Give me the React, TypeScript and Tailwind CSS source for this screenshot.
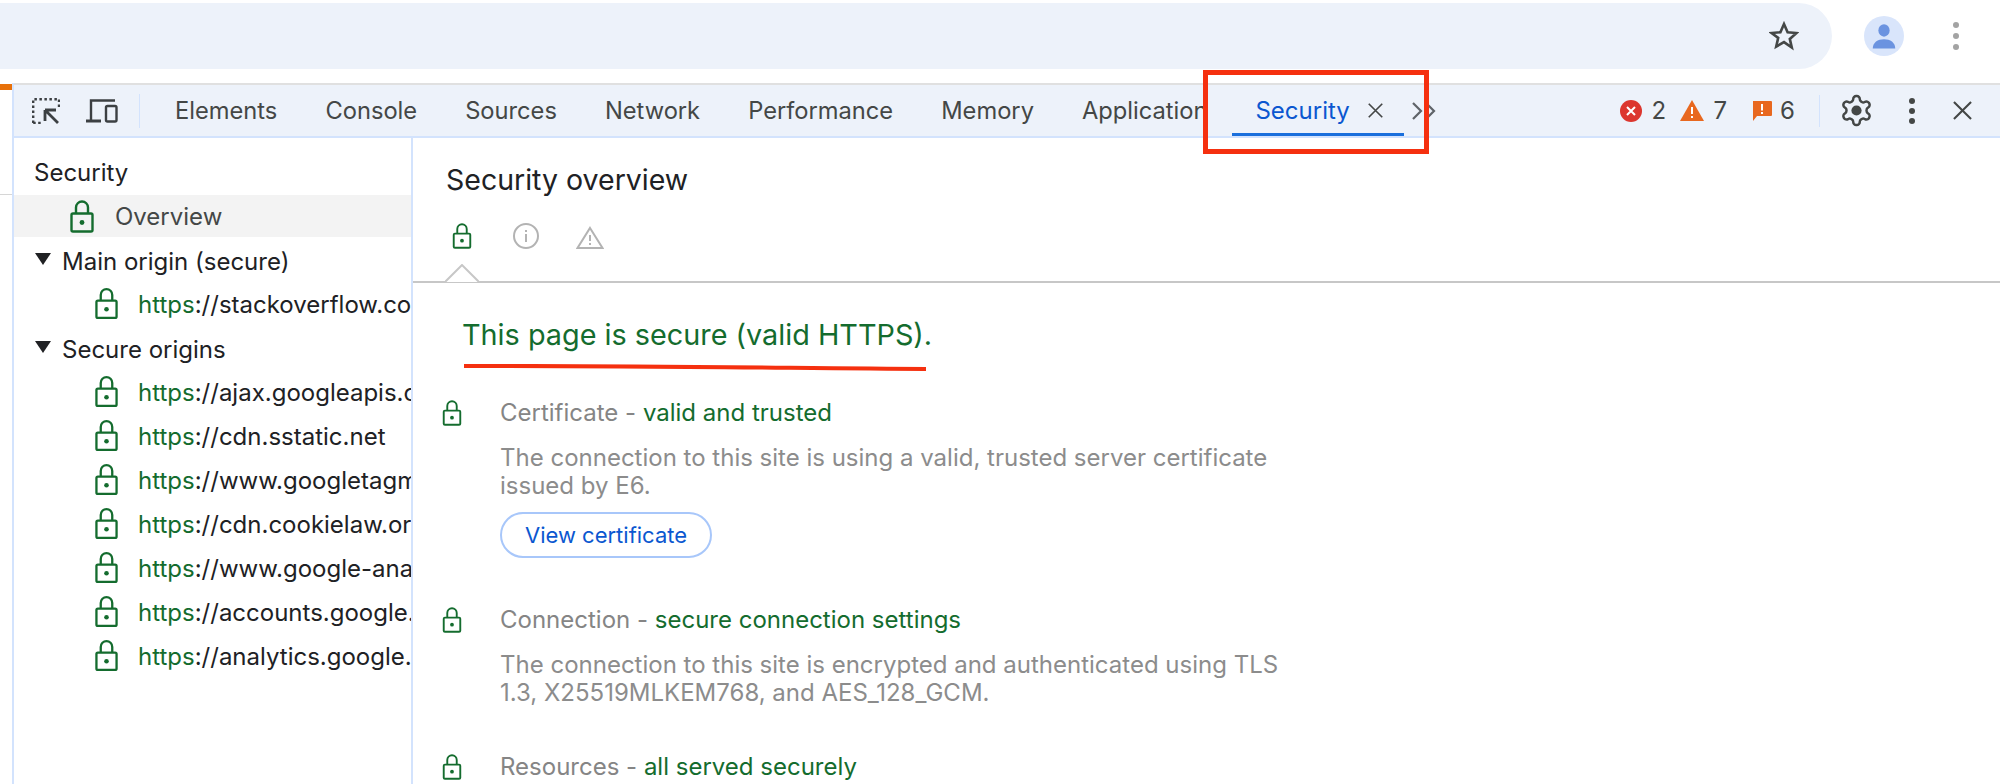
const tabs = ["Elements", "Console", "Sources", "Network", "Performance", "Memory"];

const origins = [
  "ajax.googleapis.com",
  "cdn.sstatic.net",
  "www.googletagmanager.com",
  "cdn.cookielaw.org",
  "www.google-analytics.com",
  "accounts.google.com",
  "analytics.google.com",
];

const Lock = ({ className }: { className: string }) => (
  <svg viewBox="0 0 24 33" className={`shrink-0 ${className}`} fill="none" stroke="#146c2e" strokeWidth="2.4">
    <rect x="1.5" y="13.5" width="21" height="18" rx="1.5" />
    <path d="M6 13.5V7.5a6 6 0 0 1 12 0v6" />
    <circle cx="12" cy="22.5" r="2.4" fill="#146c2e" stroke="none" />
  </svg>
);

const Cross = ({ className }: { className: string }) => (
  <svg viewBox="0 0 20 20" className={`shrink-0 ${className}`} fill="none" stroke="#444746" strokeWidth="2.2">
    <path d="M1 1l18 18M19 1L1 19" />
  </svg>
);

const OriginRow = ({ host }: { host: string }) => (
  <div className="flex h-[44px] items-center pl-[81px]">
    <Lock className="h-[33px] w-[23px]" />
    <span className="ml-[20px] whitespace-nowrap pt-[4px] text-[#202124]">
      <span className="text-[#146c2e]">https</span>://{host}
    </span>
  </div>
);

const TreeHeader = ({ label }: { label: string }) => (
  <div className="flex h-[44px] items-center pl-[21px]">
    <svg viewBox="0 0 16 12" className="h-[12px] w-[16px]">
      <path d="M0 0h16L8 12z" fill="#202124" />
    </svg>
    <span className="ml-[11px] pt-[5px] text-[#202124]">{label}</span>
  </div>
);

const Section = ({ label, value, children }: { label: string; value: string; children?: React.ReactNode }) => (
  <div className="flex">
    <Lock className="mt-[1px] h-[26px] w-[20px]" />
    <div className="ml-[38px] w-[790px]">
      <div className="leading-[28px] text-[#858585]">
        {label} - <span className="text-[#146c2e]">{value}</span>
      </div>
      {children}
    </div>
  </div>
);

export default function App() {
  return (
    <div className="flex h-[784px] w-[2000px] flex-col overflow-hidden bg-white pt-[3px] font-['Inter',sans-serif] text-[24px]">
      <div className="flex h-[66px] items-center">
        <div className="flex h-full w-[1832px] items-center justify-end rounded-r-[33px] bg-[#edf2fa] pr-[33px]">
          <svg viewBox="0 0 30 30" className="h-[30px] w-[30px]" fill="none" stroke="#444746" strokeWidth="2.6" strokeLinejoin="miter">
            <path d="M15 3l3.6 8.2 8.9.8-6.7 5.9 2 8.7L15 21.1l-7.8 4.5 2-8.7L2.500 12l8.900-.8z" />
          </svg>
        </div>
        <div className="ml-[32px] flex h-[40px] w-[40px] items-center justify-center rounded-full bg-[#d9e5fb]">
          <svg viewBox="0 0 24 24" className="h-[30px] w-[30px]" fill="#6b93e0">
            <ellipse cx="12" cy="7.500" rx="4.500" ry="5" />
            <path d="M3 22c0-5 4-7.500 9-7.500s9 2.500 9 7.500z" />
          </svg>
        </div>
        <div className="ml-[49px] flex flex-col gap-[5px]">
          <span className="h-[6px] w-[6px] rounded-full bg-[#a3a3a3]" />
          <span className="h-[6px] w-[6px] rounded-full bg-[#a3a3a3]" />
          <span className="h-[6px] w-[6px] rounded-full bg-[#a3a3a3]" />
        </div>
      </div>

      <div className="mt-[14px] flex min-h-0 flex-1">
        {/* page peeking out at the left of devtools */}
        <div className="w-[12px] shrink-0">
          <div className="mt-[1px] h-[6px] bg-[#e8710a]" />
          <div className="mt-[104px] h-[1px] bg-[#d6d6d6]" />
        </div>

        <div className="flex min-w-0 flex-1 flex-col border-l-2 border-[#d3e3fd]">
          <div className="flex h-[55px] shrink-0 items-center border-y-2 border-t-[#e0e0e0] border-b-[#d3e3fd] bg-[#edf2fa] pl-[18px] pr-[28.500px] text-[#444746]">
            <svg viewBox="0 0 28 26" className="h-[26px] w-[28px] shrink-0" fill="none" stroke="#3c4043" strokeWidth="2.400">
              <path d="M1.200 25V1.200H27V10" strokeDasharray="2.500 2.500" />
              <path d="M1.200 25H9" strokeDasharray="2.500 2.500" />
              <path d="M13 12h11M13 12v11M13.500 12.500L26 25" strokeWidth="2.800" />
            </svg>
            <svg viewBox="0 0 32 24" className="ml-[26px] h-[24px] w-[32px] shrink-0" fill="none" stroke="#3c4043" strokeWidth="2.400">
              <path d="M5 21V1.500h24" />
              <path d="M0 22h15" strokeWidth="3" />
              <rect x="20" y="7" width="10.500" height="15.500" rx="1.500" />
            </svg>
            <div className="ml-[21px] mr-[11px] h-[34px] w-[1px] shrink-0 bg-[#d3e3fd]" />
            {tabs.map((tab) => (
              <span key={tab} className="shrink-0 px-[24px] text-[23.700px]">
                {tab}
              </span>
            ))}
            <span className="w-[149.500px] shrink-0 overflow-hidden whitespace-nowrap pl-[24px] text-[23.700px]">Application</span>
            <div className="relative ml-[25px] flex h-full w-[172px] shrink-0 items-center pl-[23px] text-[#0b57d0]">
              Security
              <Cross className="ml-[18.500px] h-[15px] w-[15px]" />
              <div className="absolute bottom-0 left-0 right-0 h-[3px] bg-[#1a6fdc]" />
            </div>
            <svg viewBox="0 0 24 18" className="ml-[8px] h-[18px] w-[24px] shrink-0" fill="none" stroke="#5f6368" strokeWidth="2.200">
              <path d="M1 1l8 8-8 8M14 1l8 8-8 8" />
            </svg>

            <div className="ml-auto flex items-center">
              <svg viewBox="0 0 22 22" className="h-[22px] w-[22px]">
                <circle cx="11" cy="11" r="11" fill="#dc362e" />
                <path d="M7 7l8 8M15 7l-8 8" stroke="#fff" strokeWidth="2" />
              </svg>
              <span className="ml-[9.500px]">2</span>
              <svg viewBox="0 0 24 21" className="ml-[14px] h-[21px] w-[24px]">
                <path d="M12 0l12 21H0z" fill="#e8681f" />
                <path d="M11 7h2v7h-2zM11 16h2v2h-2z" fill="#fff" />
              </svg>
              <span className="ml-[9.500px]">7</span>
              <svg viewBox="0 0 20 20" className="ml-[25px] h-[20px] w-[20px]">
                <path d="M1 0h18a1 1 0 0 1 1 1v13a1 1 0 0 1-1 1H5l-4 5z" fill="#e8681f" />
                <path d="M9 3h2v6.500H9zM9 11h2v2H9z" fill="#fff" />
              </svg>
              <span className="ml-[8px]">6</span>
              <div className="ml-[24px] h-[32px] w-[1px] bg-[#d3e3fd]" />
              <svg viewBox="0 0 24 24" className="ml-[18.500px] h-[35px] w-[35px]" fill="none" stroke="#444746" strokeWidth="1.700">
                <path d="M12.220 2h-.44a2 2 0 0 0-2 2v.18a2 2 0 0 1-1 1.730l-.43.250a2 2 0 0 1-2 0l-.15-.08a2 2 0 0 0-2.730.730l-.22.380a2 2 0 0 0 .730 2.730l.15.100a2 2 0 0 1 1 1.720v.510a2 2 0 0 1-1 1.740l-.15.090a2 2 0 0 0-.730 2.730l.22.380a2 2 0 0 0 2.730.730l.15-.08a2 2 0 0 1 2 0l.43.250a2 2 0 0 1 1 1.730V20a2 2 0 0 0 2 2h.44a2 2 0 0 0 2-2v-.18a2 2 0 0 1 1-1.730l.43-.25a2 2 0 0 1 2 0l.15.08a2 2 0 0 0 2.730-.73l.22-.39a2 2 0 0 0-.73-2.730l-.15-.08a2 2 0 0 1-1-1.740v-.5a2 2 0 0 1 1-1.740l.15-.09a2 2 0 0 0 .73-2.730l-.22-.38a2 2 0 0 0-2.730-.73l-.15.08a2 2 0 0 1-2 0l-.43-.25a2 2 0 0 1-1-1.730V4a2 2 0 0 0-2-2z" />
                <circle cx="12" cy="12" r="3.500" fill="#444746" stroke="none" />
              </svg>
              <div className="ml-[35.500px] flex flex-col gap-[4px]">
                <span className="h-[6px] w-[6px] rounded-full bg-[#444746]" />
                <span className="h-[6px] w-[6px] rounded-full bg-[#444746]" />
                <span className="h-[6px] w-[6px] rounded-full bg-[#444746]" />
              </div>
              <Cross className="ml-[37.500px] h-[19px] w-[19px]" />
            </div>
          </div>

          <div className="flex min-h-0 flex-1">
            <div className="w-[399px] shrink-0 overflow-hidden border-r-2 border-[#d3e3fd] pt-[14px]">
              <div className="flex h-[43px] items-center pb-[2px] pl-[20px] text-[#202124]">Security</div>
              <div className="flex h-[42px] items-center bg-[#f3f3f3] pl-[56px]">
                <Lock className="h-[33px] w-[24px]" />
                <span className="ml-[21px] pt-[2px] text-[#444746]">Overview</span>
              </div>
              <TreeHeader label="Main origin (secure)" />
              <OriginRow host="stackoverflow.com" />
              <TreeHeader label="Secure origins" />
              {origins.map((host) => (
                <OriginRow key={host} host={host} />
              ))}
            </div>

            <div className="relative min-w-0 flex-1">
              <div className="flex h-[85px] items-center pl-[33px] text-[28.500px] text-[#202124]">Security overview</div>
              <div className="flex h-[60px] border-b-2 border-[#c7c7c7] pl-[39px]">
                <Lock className="h-[26px] w-[20px]" />
                <svg viewBox="0 0 26 26" className="ml-[41px] h-[26px] w-[26px]" fill="none" stroke="#b3b3b3" strokeWidth="2">
                  <circle cx="13" cy="13" r="12" />
                  <path d="M13 11v8M13 7v2" />
                </svg>
                <svg viewBox="0 0 28 23" className="ml-[37px] mt-[3px] h-[23px] w-[28px]" fill="none" stroke="#b3b3b3" strokeWidth="2">
                  <path d="M14 2l12.500 20H1.500z" />
                  <path d="M14 9v6M14 17v2" />
                </svg>
              </div>
              {/* tab notch sitting on the divider line */}
              <svg viewBox="0 0 34 19" className="absolute left-[32px] top-[126px] h-[19px] w-[34px]" fill="#fff" stroke="#c7c7c7" strokeWidth="2">
                <path d="M0 18L17 1l17 17" />
              </svg>

              <div className="pl-[49px] pt-[35px] text-[28.800px] leading-[34px] text-[#146c2e]">This page is secure (valid HTTPS).</div>
              <svg viewBox="0 0 462 7" className="absolute left-[51px] top-[226px] h-[7px] w-[462px]" fill="none" stroke="#f5300f" strokeWidth="4">
                <path d="M0 2C150 1.500 320 4 462 5" />
              </svg>

              <div className="flex flex-col pl-[29px] pt-[47px]">
                <Section label="Certificate" value="valid and trusted">
                  <div className="mt-[17px] leading-[28px] text-[#8c8c8c]">
                    The connection to this site is using a valid, trusted server certificate issued by E6.
                  </div>
                  <button className="mt-[12px] h-[46px] w-[212px] rounded-full border-2 border-[#a8c7fa] text-[22px] text-[#0b57d0]">View certificate</button>
                </Section>
                <div className="mt-[48px]">
                  <Section label="Connection" value="secure connection settings">
                    <div className="mt-[17px] leading-[28px] text-[#8c8c8c]">
                      The connection to this site is encrypted and authenticated using TLS 1.3, X25519MLKEM768, and AES_128_GCM.
                    </div>
                  </Section>
                </div>
                <div className="mt-[46px]">
                  <Section label="Resources" value="all served securely" />
                </div>
              </div>
            </div>
          </div>
        </div>
      </div>

      {/* annotation box around the Security tab */}
      <div className="absolute left-[1203px] top-[70px] h-[84px] w-[226px] border-[5px] border-[#f5300f]" />
    </div>
  );
}
